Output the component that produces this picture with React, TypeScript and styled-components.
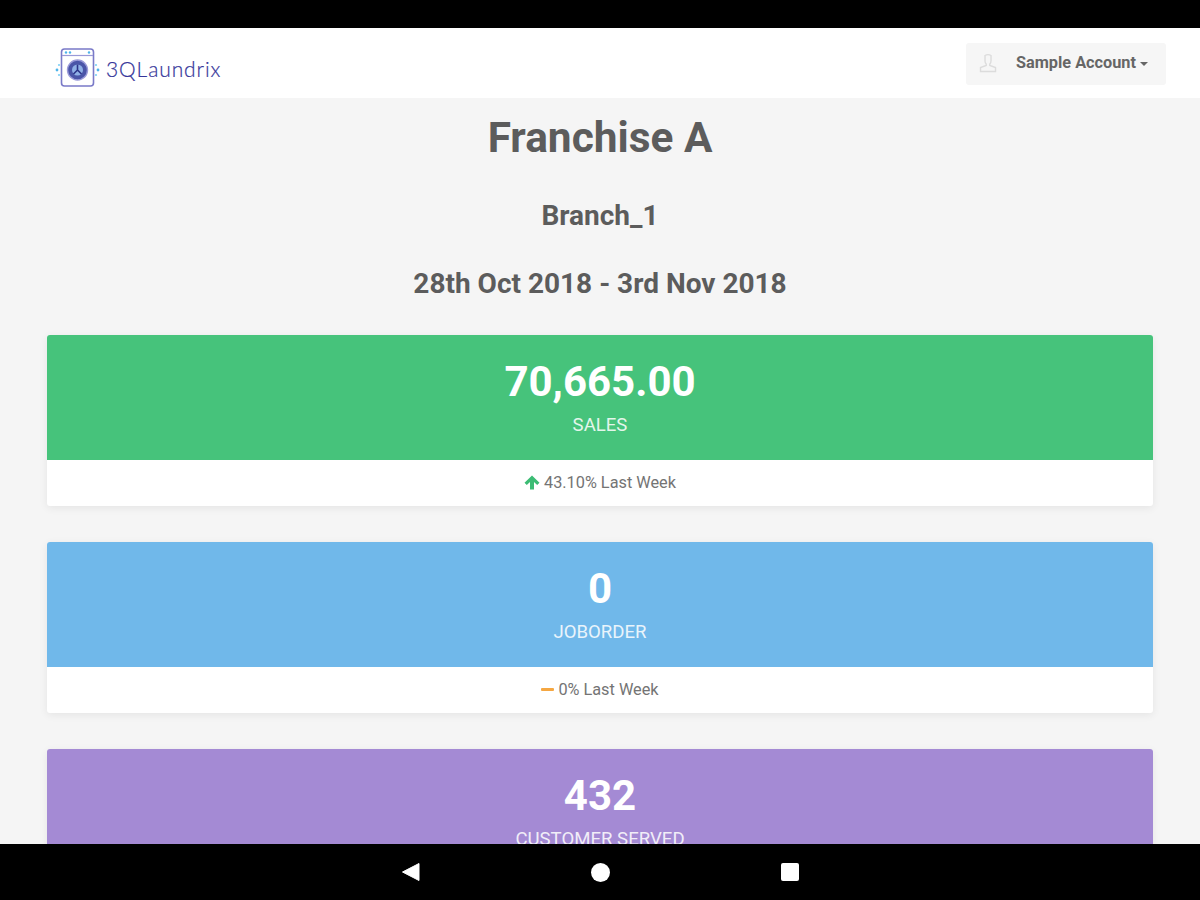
import * as React from 'react';
import styled, { createGlobalStyle } from 'styled-components';

const GlobalStyle = createGlobalStyle`
  html, body {
    margin: 0;
    height: 100%;
    overflow: hidden;
    font-family: Roboto, 'Liberation Sans', sans-serif;
  }
  #root {
    height: 100%;
  }
`

const Device = styled.div`
  display: flex;
  flex-direction: column;
  height: 900px;
  background: #000;
`

const StatusBar = styled.div`
  height: 28px;
  flex: none;
  background: #000;
`

const Screen = styled.div`
  flex: 1;
  min-height: 0;
  overflow: hidden;
  background: #f5f5f5;
`

const TopNav = styled.header`
  height: 70px;
  display: flex;
  align-items: flex-start;
  justify-content: space-between;
  background: #fff;
  padding: 0 34px 0 55px;
`

const Logo = styled.div`
  display: flex;
  align-items: center;
  gap: 5px;
  margin-top: 20px;
`

const LogoText = styled.span`
  font-family: Lato, sans-serif;
  font-size: 21px;
  font-weight: 300;
  letter-spacing: 0.9px;
  color: #35359a;
  -webkit-text-stroke: 0.2px #35359a;
`

const AccountButton = styled.div`
  width: 200px;
  height: 42px;
  margin-top: 15px;
  box-sizing: border-box;
  padding: 0 16px 3px 12px;
  display: flex;
  align-items: center;
  background: #f6f6f6;
  border-radius: 3px;
  color: #666;
  font-size: 16.3px;
  font-weight: 700;
`

const AccountName = styled.span`
  margin-left: 18px;
  white-space: nowrap;
`

const Caret = styled.span`
  width: 0;
  height: 0;
  margin: 2px 0 0 4px;
  border-left: 4px solid transparent;
  border-right: 4px solid transparent;
  border-top: 4px solid #666;
`

const Content = styled.main`
  padding: 0 47px;
  text-align: center;
  color: #5c5c5c;
`

const Title = styled.h1`
  margin: 0;
  padding-top: 15px;
  font-size: 42.4px;
  line-height: 50px;
  font-weight: 700;
`

const Subtitle = styled.h3`
  margin: 0;
  padding-top: 35px;
  font-size: 28px;
  line-height: 35px;
  font-weight: 700;
`

const DateRange = styled(Subtitle)`
  padding-top: 33px;
`

const Cards = styled.div`
  display: flex;
  flex-direction: column;
  gap: 36px;
  margin-top: 34px;
`

const Card = styled.section`
  border-radius: 3px;
  overflow: hidden;
  background: #fff;
  box-shadow: 0 2px 8px rgba(0, 0, 0, 0.07);
`

const CardBody = styled.div<{ $color: string }>`
  height: 125px;
  box-sizing: border-box;
  padding-top: 20px;
  background: ${p => p.$color};
  color: #fff;
`

const CardValue = styled.div`
  font-size: 42px;
  line-height: 54px;
  font-weight: 700;
`

const CardLabel = styled.div`
  margin-top: 5px;
  font-size: 18.6px;
  line-height: 22px;
  opacity: 0.85;
`

const CardFooter = styled.div`
  height: 46px;
  box-sizing: border-box;
  padding-bottom: 2px;
  display: flex;
  align-items: center;
  justify-content: center;
  gap: 4px;
  color: #747474;
  font-size: 16.3px;
`

const Dash = styled.span`
  width: 13px;
  height: 3px;
  background: #f5a742;
  border-radius: 1px;
`

const BottomBar = styled.nav`
  height: 56px;
  flex: none;
  display: flex;
  align-items: center;
  justify-content: center;
  gap: 171px;
  background: #000;
`

const HomeDot = styled.span`
  width: 19px;
  height: 19px;
  border-radius: 50%;
  background: #fff;
`

const RecentSquare = styled.span`
  width: 18px;
  height: 18px;
  border-radius: 2px;
  background: #fff;
`

const BackIcon = () => (
  <svg width="19" height="20" viewBox="0 0 19 20">
    <path d="M18 1.5 V18.5 L1.5 10 Z" fill="#fff" stroke="#fff" strokeWidth="1" strokeLinejoin="round" />
  </svg>
)

const UpArrow = () => (
  <svg width="16" height="15" viewBox="0 0 16 15">
    <path d="M8 0.5 L15.5 7.8 L13.2 10 L10 7 V14.5 H6 V7 L2.8 10 L0.5 7.8 Z" fill="#3cbc74" />
  </svg>
)

const UserIcon = () => (
  <svg width="20" height="20" viewBox="0 0 20 20" fill="none" stroke="#dcdcdc" strokeWidth="1.4">
    <path d="M7 2.5 Q10 0.8 13 2.5 V8 Q13 10 11.8 11 V12.5 L17.5 14.5 V18.5 H2.5 V14.5 L8.2 12.5 V11 Q7 10 7 8 Z" />
  </svg>
)

const LogoMark = () => (
  <svg width="46" height="40" viewBox="0 0 46 40">
    <rect x="6.5" y="1" width="32" height="37" rx="3" fill="#fff" stroke="#7a7ac8" strokeWidth="1.6" />
    <path d="M7 7.5 H38" stroke="#9a9ad8" strokeWidth="1.2" />
    <circle cx="11" cy="4.5" r="1.2" fill="#4db4ea" />
    <circle cx="15" cy="4.5" r="1.2" fill="#4db4ea" />
    <circle cx="34" cy="4.5" r="1.2" fill="#4db4ea" />
    <circle cx="22.5" cy="22" r="10" fill="#4a55a8" stroke="#9a9ad8" strokeWidth="1.4" />
    <circle cx="22.5" cy="22" r="5.5" fill="#8fb0e6" />
    <path d="M22.5 16.5 V22 L18.5 26 M22.5 22 L26.5 26" stroke="#2c3489" strokeWidth="1.6" fill="none" />
    <circle cx="2" cy="22" r="1.4" fill="#4db4ea" />
    <circle cx="4" cy="17" r="1.1" fill="#7fd0f5" />
    <circle cx="4" cy="27" r="1.1" fill="#7fd0f5" />
    <circle cx="43" cy="22" r="1.4" fill="#4db4ea" />
    <circle cx="41" cy="17" r="1.1" fill="#7fd0f5" />
    <circle cx="41" cy="27" r="1.1" fill="#7fd0f5" />
  </svg>
)

const App = () => {
  return (
    <Device>
      <GlobalStyle />
      <StatusBar />
      <Screen>
        <TopNav>
          <Logo>
            <LogoMark />
            <LogoText>3QLaundrix</LogoText>
          </Logo>
          <AccountButton>
            <UserIcon />
            <AccountName>Sample Account</AccountName>
            <Caret />
          </AccountButton>
        </TopNav>
        <Content>
          <Title>Franchise A</Title>
          <Subtitle>Branch_1</Subtitle>
          <DateRange>28th Oct 2018 - 3rd Nov 2018</DateRange>
          <Cards>
            <Card>
              <CardBody $color="#46c37b">
                <CardValue>70,665.00</CardValue>
                <CardLabel>SALES</CardLabel>
              </CardBody>
              <CardFooter><UpArrow />43.10% Last Week</CardFooter>
            </Card>
            <Card>
              <CardBody $color="#70b8ea">
                <CardValue>0</CardValue>
                <CardLabel>JOBORDER</CardLabel>
              </CardBody>
              <CardFooter><Dash />0% Last Week</CardFooter>
            </Card>
            <Card>
              <CardBody $color="#a48ad4">
                <CardValue>432</CardValue>
                <CardLabel>CUSTOMER SERVED</CardLabel>
              </CardBody>
            </Card>
          </Cards>
        </Content>
      </Screen>
      <BottomBar>
        <BackIcon />
        <HomeDot />
        <RecentSquare />
      </BottomBar>
    </Device>
  )
}

export default App
